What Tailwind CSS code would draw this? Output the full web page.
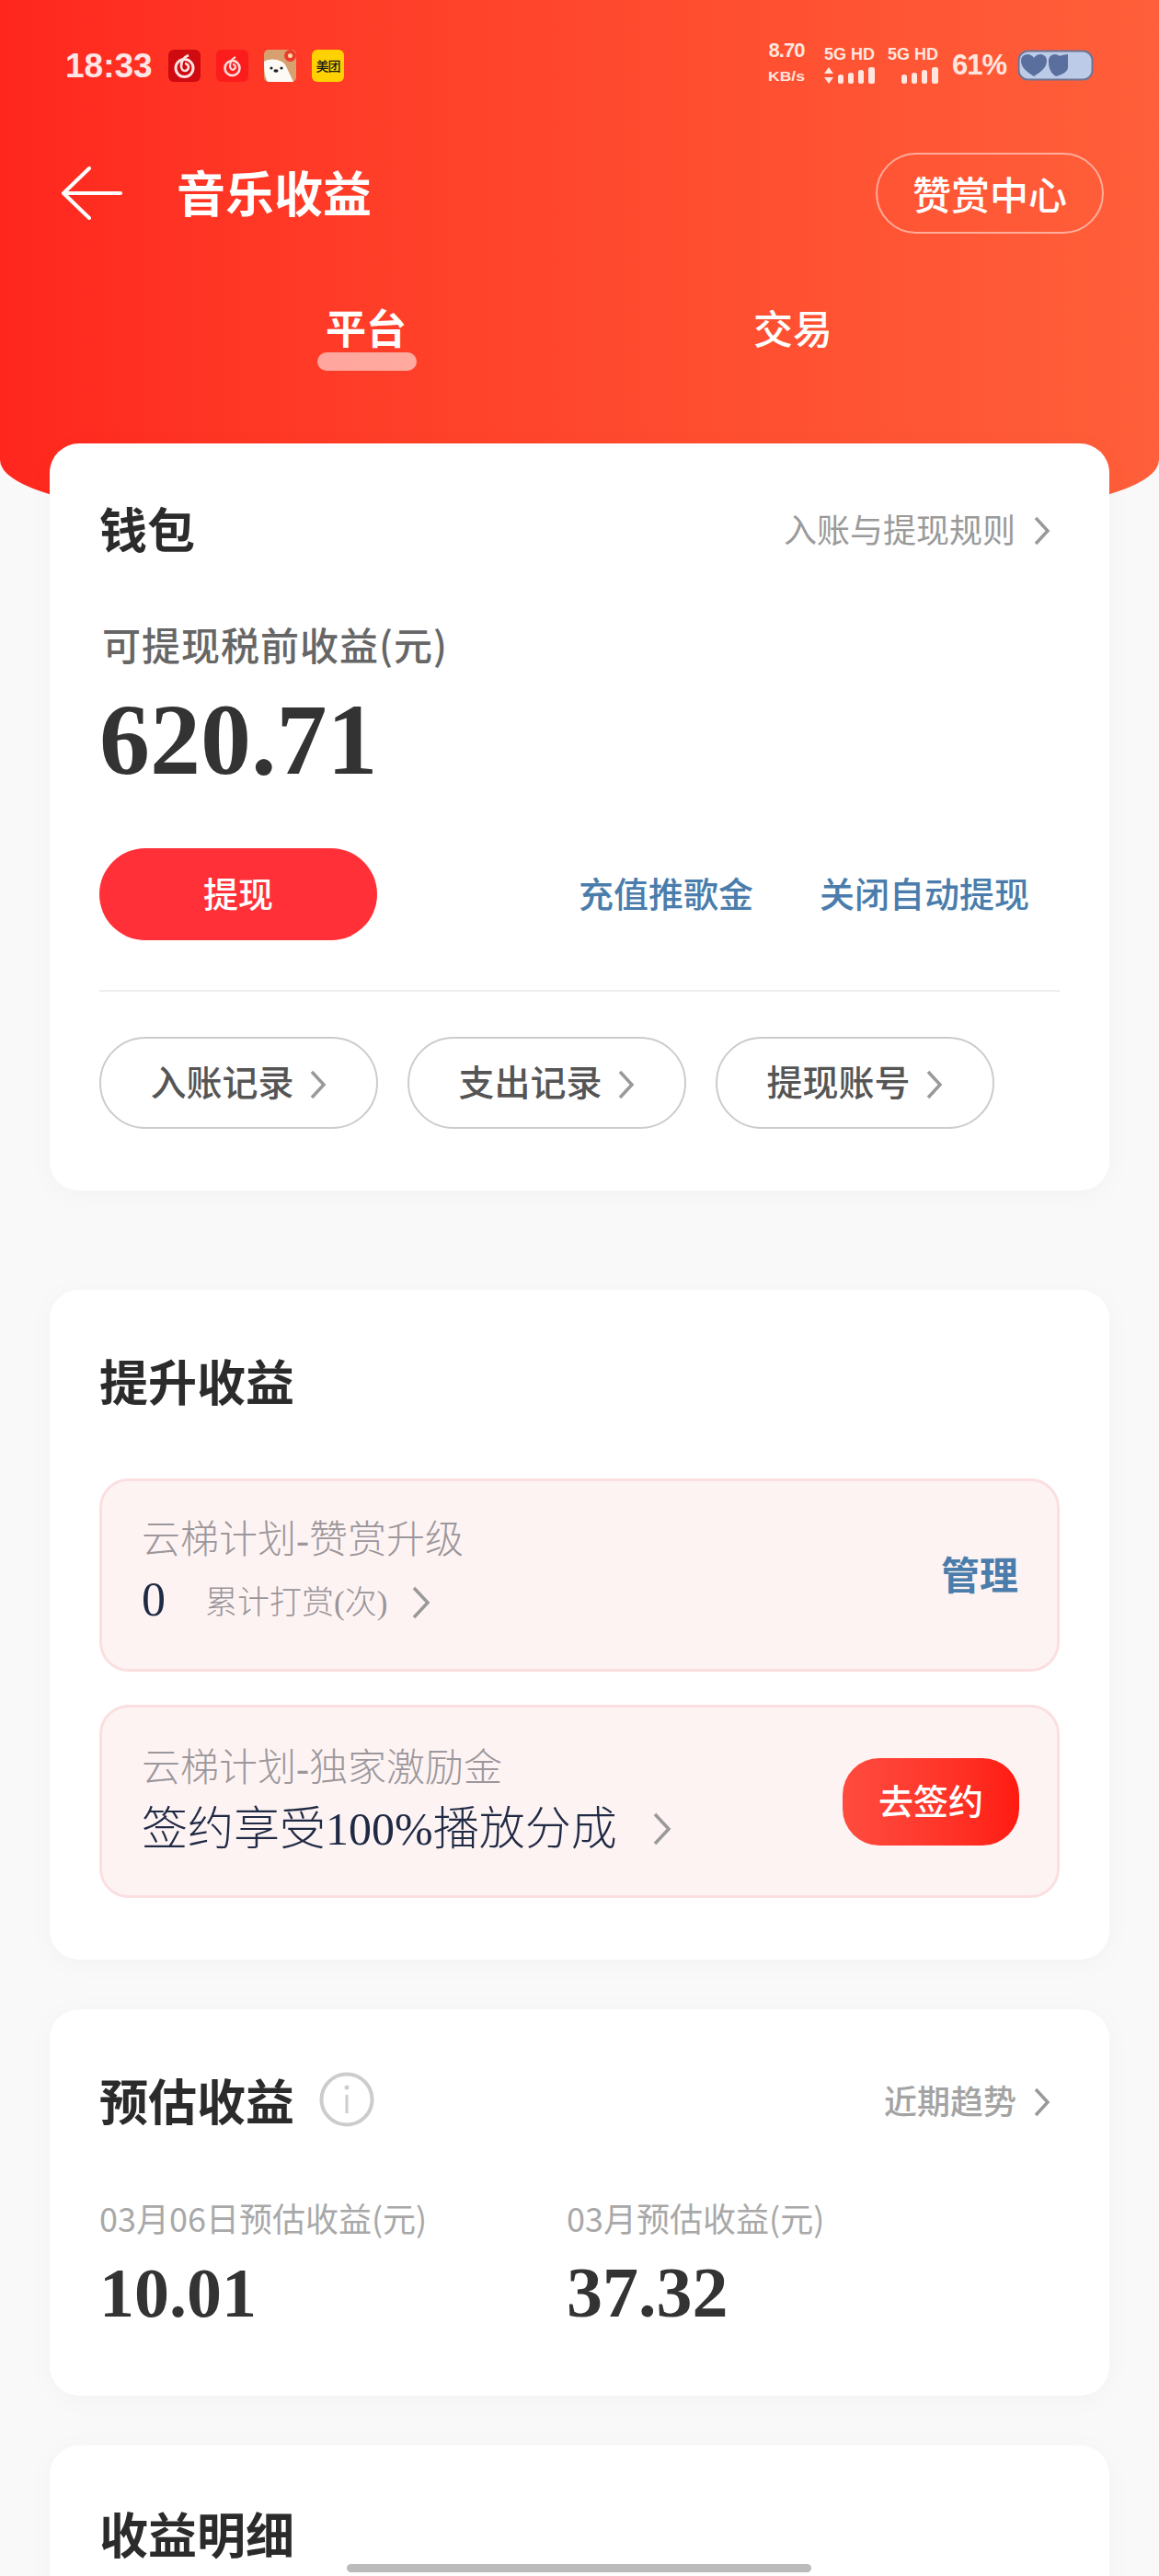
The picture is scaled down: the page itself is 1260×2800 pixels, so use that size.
<!DOCTYPE html>
<html lang="zh">
<head>
<meta charset="utf-8">
<script src="https://cdn.jsdelivr.net/npm/@tailwindcss/browser@4"></script>
</head>
<body class="m-0 bg-[#f9f9f9]">
<div class="relative w-[1260px] h-[2800px] overflow-hidden bg-[#f9f9f9] font-['Noto_Sans_CJK_SC',sans-serif]">

  <header class="h-[560px] pt-[36px] bg-gradient-to-r from-[#ff261e] to-[#ff5f3a] rounded-b-[250px_60px] text-white">
    <div class="flex items-center h-[70px] pl-[71px] pr-[71px]">
      <span class="w-[100px] text-[37px] font-bold leading-none text-[#ffe6e6] font-['Liberation_Sans',sans-serif]">18:33</span>
      <div class="flex items-center gap-[17px] ml-[12px]">
        <svg width="35" height="35" viewBox="0 0 35 35"><rect width="35" height="35" rx="6" fill="#cf0a10"/><circle cx="17.5" cy="20" r="9.5" fill="none" stroke="#ffe4e4" stroke-width="3"/><path d="M22 6c-5 2-8 6-8 12 0 3 2 5 4 5s4-2 4-4-2-4-4-4" fill="none" stroke="#ffe4e4" stroke-width="2.6"/></svg>
        <svg width="35" height="35" viewBox="0 0 35 35"><rect width="35" height="35" rx="6" fill="#fb1c1c"/><circle cx="17.5" cy="20" r="8" fill="none" stroke="#ffdcdc" stroke-width="2.6"/><path d="M21 8c-4 2-6 5-6 10 0 2 2 4 3 4s3-2 3-3-1-3-3-3" fill="none" stroke="#ffdcdc" stroke-width="2.2"/></svg>
        <svg width="35" height="35" viewBox="0 0 35 35"><rect width="35" height="35" rx="5" fill="#d7a071"/><circle cx="28.5" cy="6.5" r="6.5" fill="#ec3b2c"/><circle cx="28.5" cy="6.5" r="2.5" fill="#ffd9a8"/><path d="M0 13C8 8 21 11 24 18l8 17H4c-3-5-4-12-4-22z" fill="#fdfaf6"/><circle cx="8" cy="20" r="1.6" fill="#222"/><circle cx="19" cy="20" r="1.6" fill="#222"/><ellipse cx="13" cy="23" rx="2.6" ry="1.7" fill="#222"/></svg>
        <div class="w-[35px] h-[35px] rounded-[6px] bg-[#ffd100] flex items-center justify-center text-[#1a1a1a] text-[14px] leading-none font-medium tracking-[-1px] whitespace-nowrap">美团</div>
      </div>
      <div class="ml-auto flex items-center text-[#ffe6df] font-['Liberation_Sans',sans-serif]">
        <div class="w-[50px] flex flex-col items-center leading-none mr-[16px] -translate-y-[4px]">
          <span class="text-[22px] font-bold tracking-[-1px]">8.70</span>
          <span class="text-[14px] font-bold mt-[10px] scale-x-125">KB/s</span>
        </div>
        <div class="w-[57px] flex flex-col leading-none mr-[12px]">
          <span class="text-[18px] font-bold whitespace-nowrap">5G HD</span>
          <svg class="mt-[4px]" width="57" height="20" viewBox="0 0 57 20"><path d="M5 1l5 7H0zM5 19l5-7H0z" fill="#ffe6df"/><rect x="15" y="9" width="6" height="10" rx="2.5" fill="#ffe6df"/><rect x="26" y="7" width="6" height="12" rx="2.5" fill="#ffe6df"/><rect x="37" y="4" width="6" height="15" rx="2.5" fill="#ffe6df"/><rect x="48" y="1" width="7" height="18" rx="2.5" fill="#ffe6df"/></svg>
        </div>
        <div class="w-[57px] flex flex-col leading-none mr-[13px]">
          <span class="text-[18px] font-bold whitespace-nowrap">5G HD</span>
          <svg class="mt-[4px]" width="57" height="20" viewBox="0 0 57 20"><rect x="15" y="9" width="6" height="10" rx="2.5" fill="#ffe6df"/><rect x="26" y="7" width="6" height="12" rx="2.5" fill="#ffe6df"/><rect x="37" y="4" width="6" height="15" rx="2.5" fill="#ffe6df"/><rect x="48" y="1" width="7" height="18" rx="2.5" fill="#ffe6df"/></svg>
        </div>
        <span class="w-[58px] text-[31px] font-bold tracking-[-1px] mr-[13px]">61%</span>
        <svg width="83" height="34" viewBox="0 0 83 34"><rect x="1.5" y="1.5" width="80" height="31" rx="10" fill="#bccbe8" stroke="#6f7594" stroke-width="2"/><path d="M18 29C10 24 4 19 4 12c0-4 3-7 7-7 3 0 6 2 7 4 1-2 4-4 7-4 4 0 7 3 7 7 0 7-6 12-14 17z" fill="#5a6f9e"/><path d="M42 29c-7-4-8-11-8-17 0-4 3-7 7-7 2 0 4 1 5 2 2-1 6-2 9-2v14c0 5-6 8-13 10z" fill="#5a6f9e"/></svg>
      </div>
    </div>

    <div class="flex items-center h-[90px] mt-[59px] pl-[66px] pr-[60px]">
      <svg width="67" height="58" viewBox="0 0 67 58"><path d="M31 2 3 29l28 27M3 29h62" fill="none" stroke="#fff" stroke-width="4" stroke-linecap="round" stroke-linejoin="round"/></svg>
      <h1 class="ml-[59px] text-[53px] leading-none font-bold -translate-y-[2px]">音乐收益</h1>
      <div class="ml-auto w-[248px] h-[88px] rounded-full border-[2px] border-white/50 flex items-center justify-center text-[42px] leading-none font-medium">赞赏中心</div>
    </div>

    <div class="relative flex h-[60px] mt-[72px] pl-[354px] gap-[377px] leading-[56px]">
      <span class="relative w-[88px] text-[44px] font-bold whitespace-nowrap">平台<span class="absolute left-[-9px] top-[56px] w-[108px] h-[20px] rounded-full bg-white/55"></span></span>
      <span class="w-[86px] text-[43px] font-medium whitespace-nowrap">交易</span>
    </div>
  </header>

  <main class="-mt-[78px] mx-[54px] flex flex-col gap-[54px] relative">
    <section class="h-[812px] rounded-[32px] bg-white shadow-[0_4px_30px_rgba(0,0,0,0.03)] px-[54px] pt-[62px]">
      <div class="flex items-center justify-between h-[60px]">
        <h2 class="text-[52px] leading-none font-bold text-[#2b2b2b]">钱包</h2>
        <div class="flex items-center text-[36px] leading-none text-[#9a9a9a] pr-[9px]">入账与提现规则
          <svg class="ml-[19px] translate-y-[3px]" width="20" height="34" viewBox="0 0 20 34"><path d="M3 3l13 14L3 31" fill="none" stroke="#999" stroke-width="3.5"/></svg>
        </div>
      </div>
      <p class="mt-[66px] ml-[3px] h-[60px] text-[42px] leading-[60px] font-medium text-[#666] tracking-[1px] whitespace-nowrap">可提现税前收益(元)</p>
      <p class="mt-[19px] h-[110px] text-[110px] leading-[110px] font-bold text-[#333] font-['Liberation_Serif',serif]">620.71</p>
      <div class="mt-[63px] flex items-center">
        <div class="w-[302px] h-[100px] pb-[5px] rounded-full bg-[#ff3038] flex items-center justify-center text-white text-[38px] leading-none font-medium">提现</div>
        <div class="ml-auto flex gap-[72px] pr-[33px] pb-[5px] text-[38px] leading-none font-medium text-[#4a7dab] whitespace-nowrap">
          <span>充值推歌金</span><span>关闭自动提现</span>
        </div>
      </div>
      <div class="mt-[54px] h-[2px] bg-[#eeeeee]"></div>
      <div class="mt-[49px] flex gap-[32px]">
        <div class="w-[303px] h-[100px] rounded-full border-[2px] border-[#cccccc] flex items-center justify-center gap-[16px] text-[39px] leading-none font-medium text-[#555]"><span class="pb-[5px]">入账记录</span><svg class="translate-y-[2px]" width="20" height="34" viewBox="0 0 20 34"><path d="M3 3l13 14L3 31" fill="none" stroke="#999" stroke-width="3.5"/></svg></div>
        <div class="w-[303px] h-[100px] rounded-full border-[2px] border-[#cccccc] flex items-center justify-center gap-[16px] text-[39px] leading-none font-medium text-[#555]"><span class="pb-[5px]">支出记录</span><svg class="translate-y-[2px]" width="20" height="34" viewBox="0 0 20 34"><path d="M3 3l13 14L3 31" fill="none" stroke="#999" stroke-width="3.5"/></svg></div>
        <div class="w-[303px] h-[100px] rounded-full border-[2px] border-[#cccccc] flex items-center justify-center gap-[16px] text-[39px] leading-none font-medium text-[#555]"><span class="pb-[5px]">提现账号</span><svg class="translate-y-[2px]" width="20" height="34" viewBox="0 0 20 34"><path d="M3 3l13 14L3 31" fill="none" stroke="#999" stroke-width="3.5"/></svg></div>
      </div>
    </section>

    <section class="h-[728px] mt-[54px] rounded-[32px] bg-white shadow-[0_4px_30px_rgba(0,0,0,0.03)] px-[54px] pt-[68px]">
      <h2 class="h-[60px] text-[53px] leading-[60px] font-bold text-[#2b2b2b]">提升收益</h2>
      <div class="mt-[77px] h-[210px] rounded-[32px] border-[3px] border-[#fbdfe0] bg-[#fef3f3] flex items-center pl-[43px] pr-[42px]">
        <div class="-translate-y-[5px]">
          <p class="h-[60px] mt-[2px] text-[42px] leading-[60px] font-light text-[#9b979b] whitespace-nowrap font-['Liberation_Serif','Noto_Sans_CJK_SC',serif]">云梯计划-赞赏升级</p>
          <div class="mt-[8px] h-[60px] flex items-center whitespace-nowrap">
            <span class="w-[69px] text-[52px] leading-none text-[#1f2a44] -translate-y-[3px] font-['Liberation_Serif',serif]">0</span>
            <span class="text-[35px] leading-none font-light text-[#999599] font-['Liberation_Serif','Noto_Sans_CJK_SC',serif]">累计打赏(次)</span>
            <svg class="ml-[25px]" width="24" height="36" viewBox="0 0 24 36"><path d="M4 2l15 16L4 34" fill="none" stroke="#999" stroke-width="3.5"/></svg>
          </div>
        </div>
        <span class="ml-auto pb-[5px] text-[42px] leading-none font-bold text-[#4a7dab]">管理</span>
      </div>
      <div class="mt-[36px] h-[210px] rounded-[32px] border-[3px] border-[#fbdfe0] bg-[#fef3f3] flex items-center pl-[43px] pr-[41px]">
        <div class="-translate-y-[3px]">
          <p class="h-[60px] text-[42px] leading-[60px] font-light text-[#9b979b] whitespace-nowrap font-['Liberation_Serif','Noto_Sans_CJK_SC',serif]">云梯计划-独家激励金</p>
          <div class="mt-[6px] h-[60px] flex items-center whitespace-nowrap">
            <span class="text-[50px] leading-none font-light text-[#1f2a44] font-['Liberation_Serif','Noto_Sans_CJK_SC',serif]">签约享受100%播放分成</span>
            <svg class="ml-[37px]" width="24" height="36" viewBox="0 0 24 36"><path d="M4 2l15 16L4 34" fill="none" stroke="#999" stroke-width="3.5"/></svg>
          </div>
        </div>
        <div class="ml-auto w-[192px] h-[95px] pb-[5px] rounded-[40px] bg-gradient-to-r from-[#ff4b3f] to-[#ff1a10] flex items-center justify-center text-white text-[38px] leading-none font-medium">去签约</div>
      </div>
    </section>

    <section class="h-[420px] rounded-[32px] bg-white shadow-[0_4px_30px_rgba(0,0,0,0.03)] px-[54px] pt-[68px]">
      <div class="flex items-center h-[60px]">
        <h2 class="text-[53px] leading-none font-bold text-[#2b2b2b]">预估收益</h2>
        <svg class="ml-[27px]" width="60" height="60" viewBox="0 0 60 60"><circle cx="30" cy="30" r="27.5" fill="none" stroke="#cccccc" stroke-width="4"/><circle cx="30" cy="17" r="2.5" fill="#cccccc"/><path d="M30 25v20" stroke="#cccccc" stroke-width="3"/></svg>
        <div class="ml-auto flex items-center text-[36px] leading-none font-medium text-[#a3a3a3] pr-[9px]">近期趋势
          <svg class="ml-[18px] translate-y-[3px]" width="20" height="34" viewBox="0 0 20 34"><path d="M3 3l13 14L3 31" fill="none" stroke="#999" stroke-width="3.5"/></svg>
        </div>
      </div>
      <div class="mt-[73px] flex">
        <div class="w-[508px]">
          <p class="h-[50px] text-[36px] leading-[50px] text-[#a8a8a8] whitespace-nowrap">03月06日预估收益(元)</p>
          <p class="mt-[17px] h-[80px] text-[76px] leading-[80px] font-bold text-[#333] font-['Liberation_Serif',serif]">10.01</p>
        </div>
        <div>
          <p class="h-[50px] text-[36px] leading-[50px] text-[#a8a8a8] whitespace-nowrap">03月预估收益(元)</p>
          <p class="mt-[17px] h-[80px] text-[78px] leading-[80px] font-bold text-[#333] font-['Liberation_Serif',serif]">37.32</p>
        </div>
      </div>
    </section>

    <section class="h-[300px] rounded-[32px] bg-white shadow-[0_4px_30px_rgba(0,0,0,0.03)] px-[54px] pt-[65px]">
      <h2 class="h-[60px] text-[53px] leading-[60px] font-bold text-[#2b2b2b]">收益明细</h2>
    </section>
  </main>

  <div class="absolute left-[377px] top-[2787px] w-[505px] h-[9px] rounded-full bg-[#bbbbbb]"></div>
</div>
</body>
</html>
